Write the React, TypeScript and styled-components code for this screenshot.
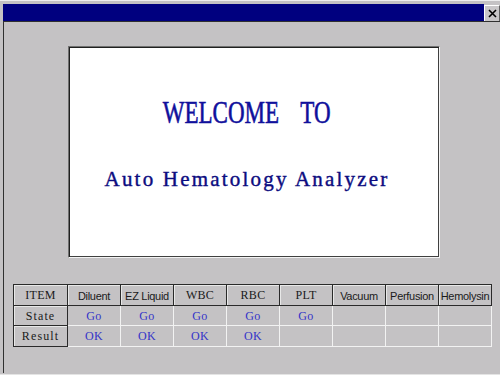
import React from 'react'
import styled, { createGlobalStyle } from 'styled-components'

const GlobalStyle = createGlobalStyle`
  html, body {
    margin: 0;
    padding: 0;
    background: #c4c2c4;
  }
  * {
    box-sizing: border-box;
  }
`

type CellKind = 'head' | 'label' | 'data'

interface Column {
  name: string
  serif?: boolean
  state?: string
  result?: string
}

const columns: Column[] = [
  { name: 'Diluent', state: 'Go', result: 'OK' },
  { name: 'EZ Liquid', state: 'Go', result: 'OK' },
  { name: 'WBC', serif: true, state: 'Go', result: 'OK' },
  { name: 'RBC', serif: true, state: 'Go', result: 'OK' },
  { name: 'PLT', serif: true, state: 'Go' },
  { name: 'Vacuum' },
  { name: 'Perfusion' },
  { name: 'Hemolysin' }
]

const App: React.FC = () => {
  return (
    <>
      <GlobalStyle />
      <Frame>
        <TitleBar>
          <Caption />
          <CloseButton>
            <svg width="9" height="9" viewBox="0 0 9 9">
              <path d="M1 1 L8 8 M8 1 L1 8" stroke="#000" strokeWidth="1.6" />
            </svg>
          </CloseButton>
        </TitleBar>
        <Body>
          <WelcomePanel>
            <Welcome>WELCOME TO</Welcome>
            <Product>Auto Hematology Analyzer</Product>
          </WelcomePanel>
          <Table>
            <Cell $kind="head" $first $serif>
              ITEM
            </Cell>
            {columns.map((c) => (
              <Cell key={c.name} $kind="head" $serif={c.serif}>
                {c.name}
              </Cell>
            ))}
            <Cell $kind="label" $first $serif $spaced>
              State
            </Cell>
            {columns.map((c) => (
              <Cell key={c.name} $kind="data" $serif>
                {c.state}
              </Cell>
            ))}
            <Cell $kind="label" $first $serif $spaced>
              Result
            </Cell>
            {columns.map((c) => (
              <Cell key={c.name} $kind="data" $serif>
                {c.result}
              </Cell>
            ))}
          </Table>
        </Body>
      </Frame>
    </>
  )
}

const Frame = styled.div`
  width: 500px;
  height: 375px;
  display: flex;
  flex-direction: column;
  padding: 3px 0 1px 3px;
  background: #c4c2c4;
  border-top: 1px solid #eeeeee;
  border-bottom: 1px solid #e4e4e4;
  overflow: hidden;
`

const TitleBar = styled.div`
  display: flex;
  align-items: stretch;
  height: 18px;
  border-bottom: 1px solid #303030;
`

const Caption = styled.div`
  flex: 1;
  background: #00007f;
`

const CloseButton = styled.div`
  width: 16px;
  display: flex;
  align-items: center;
  justify-content: center;
  margin-top: 1px;
  background: #c8c6c8;
  border-top: 1px solid #ffffff;
  border-left: 1px solid #ffffff;
  border-right: 1px solid #606060;
`

const Body = styled.div`
  flex: 1;
  display: flex;
  flex-direction: column;
  border-left: 1px solid #303030;
  padding: 24px 0 0 9px;
`

const WelcomePanel = styled.div`
  width: 372px;
  height: 212px;
  margin-left: 55px;
  display: flex;
  flex-direction: column;
  align-items: center;
  padding: 49px 14px 0 0;
  background: #ffffff;
  border: 1px solid;
  border-color: #707070 #f4f4f4 #f4f4f4 #707070;
  box-shadow: inset 1px 1px 0 #202020, inset -1px -1px 0 #404040;
`

const Welcome = styled.div`
  font-family: 'Liberation Serif', 'Times New Roman', serif;
  font-size: 32px;
  line-height: 32px;
  word-spacing: 22px;
  color: #10109c;
  -webkit-text-stroke: 0.6px #10109c;
  transform: scaleX(0.72);
  white-space: nowrap;
`

const Product = styled.div`
  margin-top: 41px;
  font-family: 'Liberation Serif', 'Times New Roman', serif;
  font-size: 21px;
  line-height: 20px;
  letter-spacing: 2.2px;
  color: #0c0c80;
  -webkit-text-stroke: 0.4px #0c0c80;
  white-space: nowrap;
`

const Table = styled.div`
  display: grid;
  grid-template-columns: 55px repeat(8, 53px);
  grid-template-rows: 22px 20px 21px;
  margin-top: 26px;
`

const Cell = styled.div<{ $kind: CellKind; $first?: boolean; $serif?: boolean; $spaced?: boolean }>`
  display: flex;
  align-items: center;
  justify-content: center;
  white-space: nowrap;
  overflow: hidden;
  font-family: ${(p) =>
    p.$serif ? "'Liberation Serif', 'Times New Roman', serif" : "'Liberation Sans', Arial, sans-serif"};
  font-size: ${(p) => (p.$serif ? '12px' : '11px')};
  letter-spacing: ${(p) => (p.$spaced ? '1.1px' : p.$serif ? '0.3px' : '-0.3px')};
  color: ${(p) => (p.$kind === 'data' ? '#3434c8' : '#1a1a1a')};
  border-right: 1px solid ${(p) => (p.$kind === 'data' ? '#f2f2f2' : '#2a2a2a')};
  border-bottom: 1px solid ${(p) => (p.$kind === 'data' ? '#f2f2f2' : '#2a2a2a')};
  border-left: ${(p) => (p.$first ? '1px solid #2a2a2a' : 'none')};
  border-top: ${(p) => (p.$kind === 'head' ? '1px solid #2a2a2a' : 'none')};
  box-shadow: ${(p) => (p.$kind === 'data' ? 'none' : 'inset 1px 1px 0 #e8e8e8')};
  padding-top: 1px;
`

export default App
